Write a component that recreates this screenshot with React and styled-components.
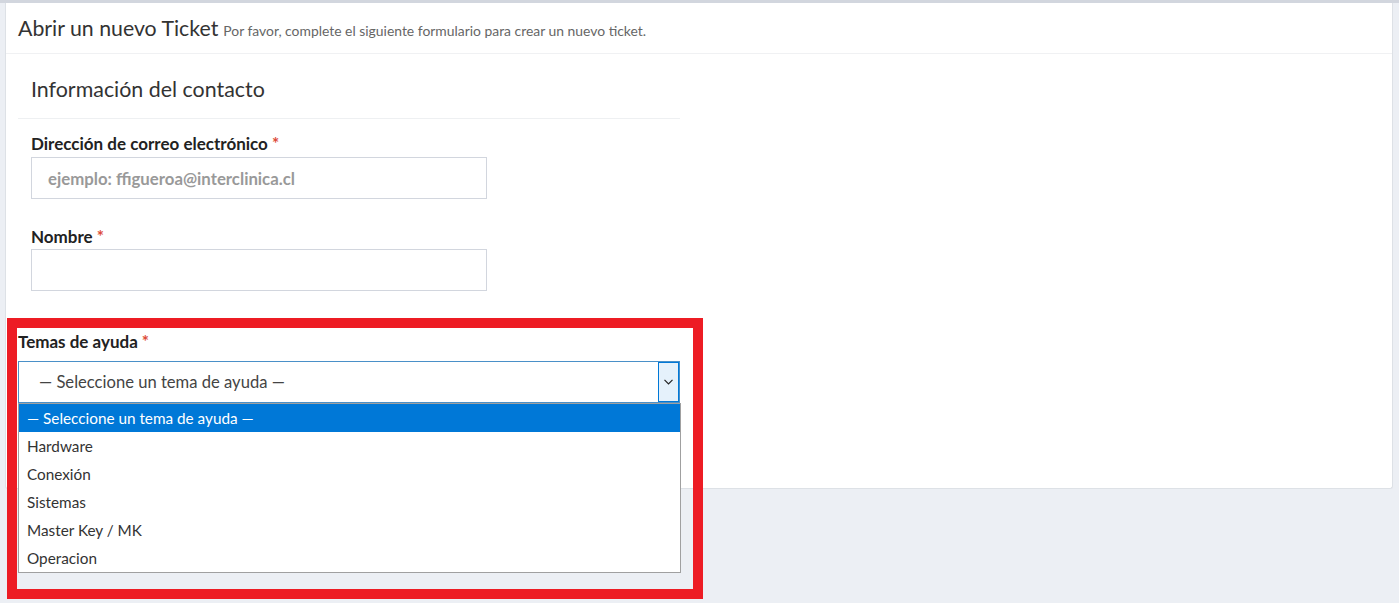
import React from 'react';
import styled, { createGlobalStyle } from 'styled-components';

const GlobalStyle = createGlobalStyle`
  html, body {
    margin: 0;
    padding: 0;
    background: #eceff4;
    font-family: Lato, "Noto Sans", sans-serif;
  }
`;

const Page = styled.div`
  position: relative;
  min-height: 603px;
  border-top: 3px solid #d2d6de;
  padding: 0 6px 0 5px;
  box-sizing: border-box;
`;

const Card = styled.section`
  background: #fff;
  border: 1px solid #dde1e6;
  border-top: none;
  border-radius: 0 0 3px 3px;
  height: 486px;
  box-sizing: border-box;
`;

const CardHeader = styled.header`
  display: flex;
  align-items: baseline;
  gap: 5px;
  height: 51px;
  padding: 12px 12px 0 12px;
  box-sizing: border-box;
  border-bottom: 1px solid #f0f1f3;
`;

const Title = styled.h1`
  margin: 0;
  font-size: 21.3px;
  font-weight: 400;
  color: #333;
`;

const Subtitle = styled.span`
  font-size: 13.9px;
  color: #666;
`;

const CardBody = styled.div`
  padding: 20px 12px 0 12px;
  width: 662px;
`;

const SectionTitle = styled.h2`
  margin: 0;
  padding: 0 13px 14px 13px;
  font-size: 21.4px;
  line-height: 30px;
  font-weight: 400;
  color: #333;
  border-bottom: 1px solid #eef0f2;
`;

const Field = styled.div`
  display: flex;
  flex-direction: column;
  padding-left: ${p => p.$indent || 0}px;
  margin-top: ${p => p.$top}px;
`;

const Label = styled.label`
  font-size: 17px;
  line-height: 20px;
  font-weight: 700;
  color: #222;
  margin-bottom: ${p => p.$gap || 3}px;

  span {
    color: #dd4b39;
    margin-left: 4px;
  }
`;

const Input = styled.div`
  width: 456px;
  height: 42px;
  box-sizing: border-box;
  border: 1px solid #d2d6de;
  padding: 0 16px;
  display: flex;
  align-items: center;
  font-size: 16.8px;
  font-weight: 700;
  color: #999;
`;

const SelectWrap = styled.div`
  position: relative;
  width: 662px;
`;

const SelectBox = styled.div`
  height: 42px;
  box-sizing: border-box;
  border: 1px solid #4a90c8;
  display: flex;
  align-items: center;
  justify-content: space-between;
  padding-left: 20px;
  font-size: 16.6px;
  color: #444;
`;

const ArrowBox = styled.div`
  width: 21px;
  height: 40px;
  box-sizing: border-box;
  border: 1px solid #0078d7;
  background: #e5f1fb;
  display: flex;
  align-items: center;
  justify-content: center;
`;

const Options = styled.ul`
  position: absolute;
  left: 0;
  top: 42px;
  width: 663px;
  margin: 0;
  padding: 0;
  list-style: none;
  background: #fff;
  border: 1px solid #a0a0a0;
  box-sizing: border-box;
  z-index: 2;
`;

const Option = styled.li`
  height: 28px;
  line-height: 28px;
  padding-left: 8px;
  font-size: 15.3px;
  color: ${p => (p.$active ? '#fff' : '#333')};
  background: ${p => (p.$active ? '#0078d7' : '#fff')};
`;

const Highlight = styled.div`
  position: absolute;
  left: 7px;
  top: 315px;
  width: 696px;
  height: 281px;
  box-sizing: border-box;
  border: 10px solid #ed1c24;
  pointer-events: none;
  z-index: 3;
`;

const topics = ['— Seleccione un tema de ayuda —', 'Hardware', 'Conexión', 'Sistemas', 'Master Key / MK', 'Operacion'];

export default function App() {
  return (
    <>
      <GlobalStyle />
      <Page>
        <Card>
          <CardHeader>
            <Title>Abrir un nuevo Ticket</Title>
            <Subtitle>Por favor, complete el siguiente formulario para crear un nuevo ticket.</Subtitle>
          </CardHeader>
          <CardBody>
            <SectionTitle>Información del contacto</SectionTitle>
            <Field $indent={13} $top={15}>
              <Label>Dirección de correo electrónico<span>*</span></Label>
              <Input>ejemplo: ffigueroa@interclinica.cl</Input>
            </Field>
            <Field $indent={13} $top={28}>
              <Label $gap={2}>Nombre<span>*</span></Label>
              <Input />
            </Field>
            <Field $top={41}>
              <Label $gap={9}>Temas de ayuda<span>*</span></Label>
              <SelectWrap>
                <SelectBox>
                  — Seleccione un tema de ayuda —
                  <ArrowBox>
                    <svg width="9" height="6" viewBox="0 0 9 6">
                      <path d="M0.5 0.8 L4.5 4.8 L8.5 0.8" fill="none" stroke="#222" strokeWidth="1.2" />
                    </svg>
                  </ArrowBox>
                </SelectBox>
                <Options>
                  {topics.map((t, i) => (
                    <Option key={t} $active={i === 0}>{t}</Option>
                  ))}
                </Options>
              </SelectWrap>
            </Field>
          </CardBody>
        </Card>
        <Highlight />
      </Page>
    </>
  );
}
